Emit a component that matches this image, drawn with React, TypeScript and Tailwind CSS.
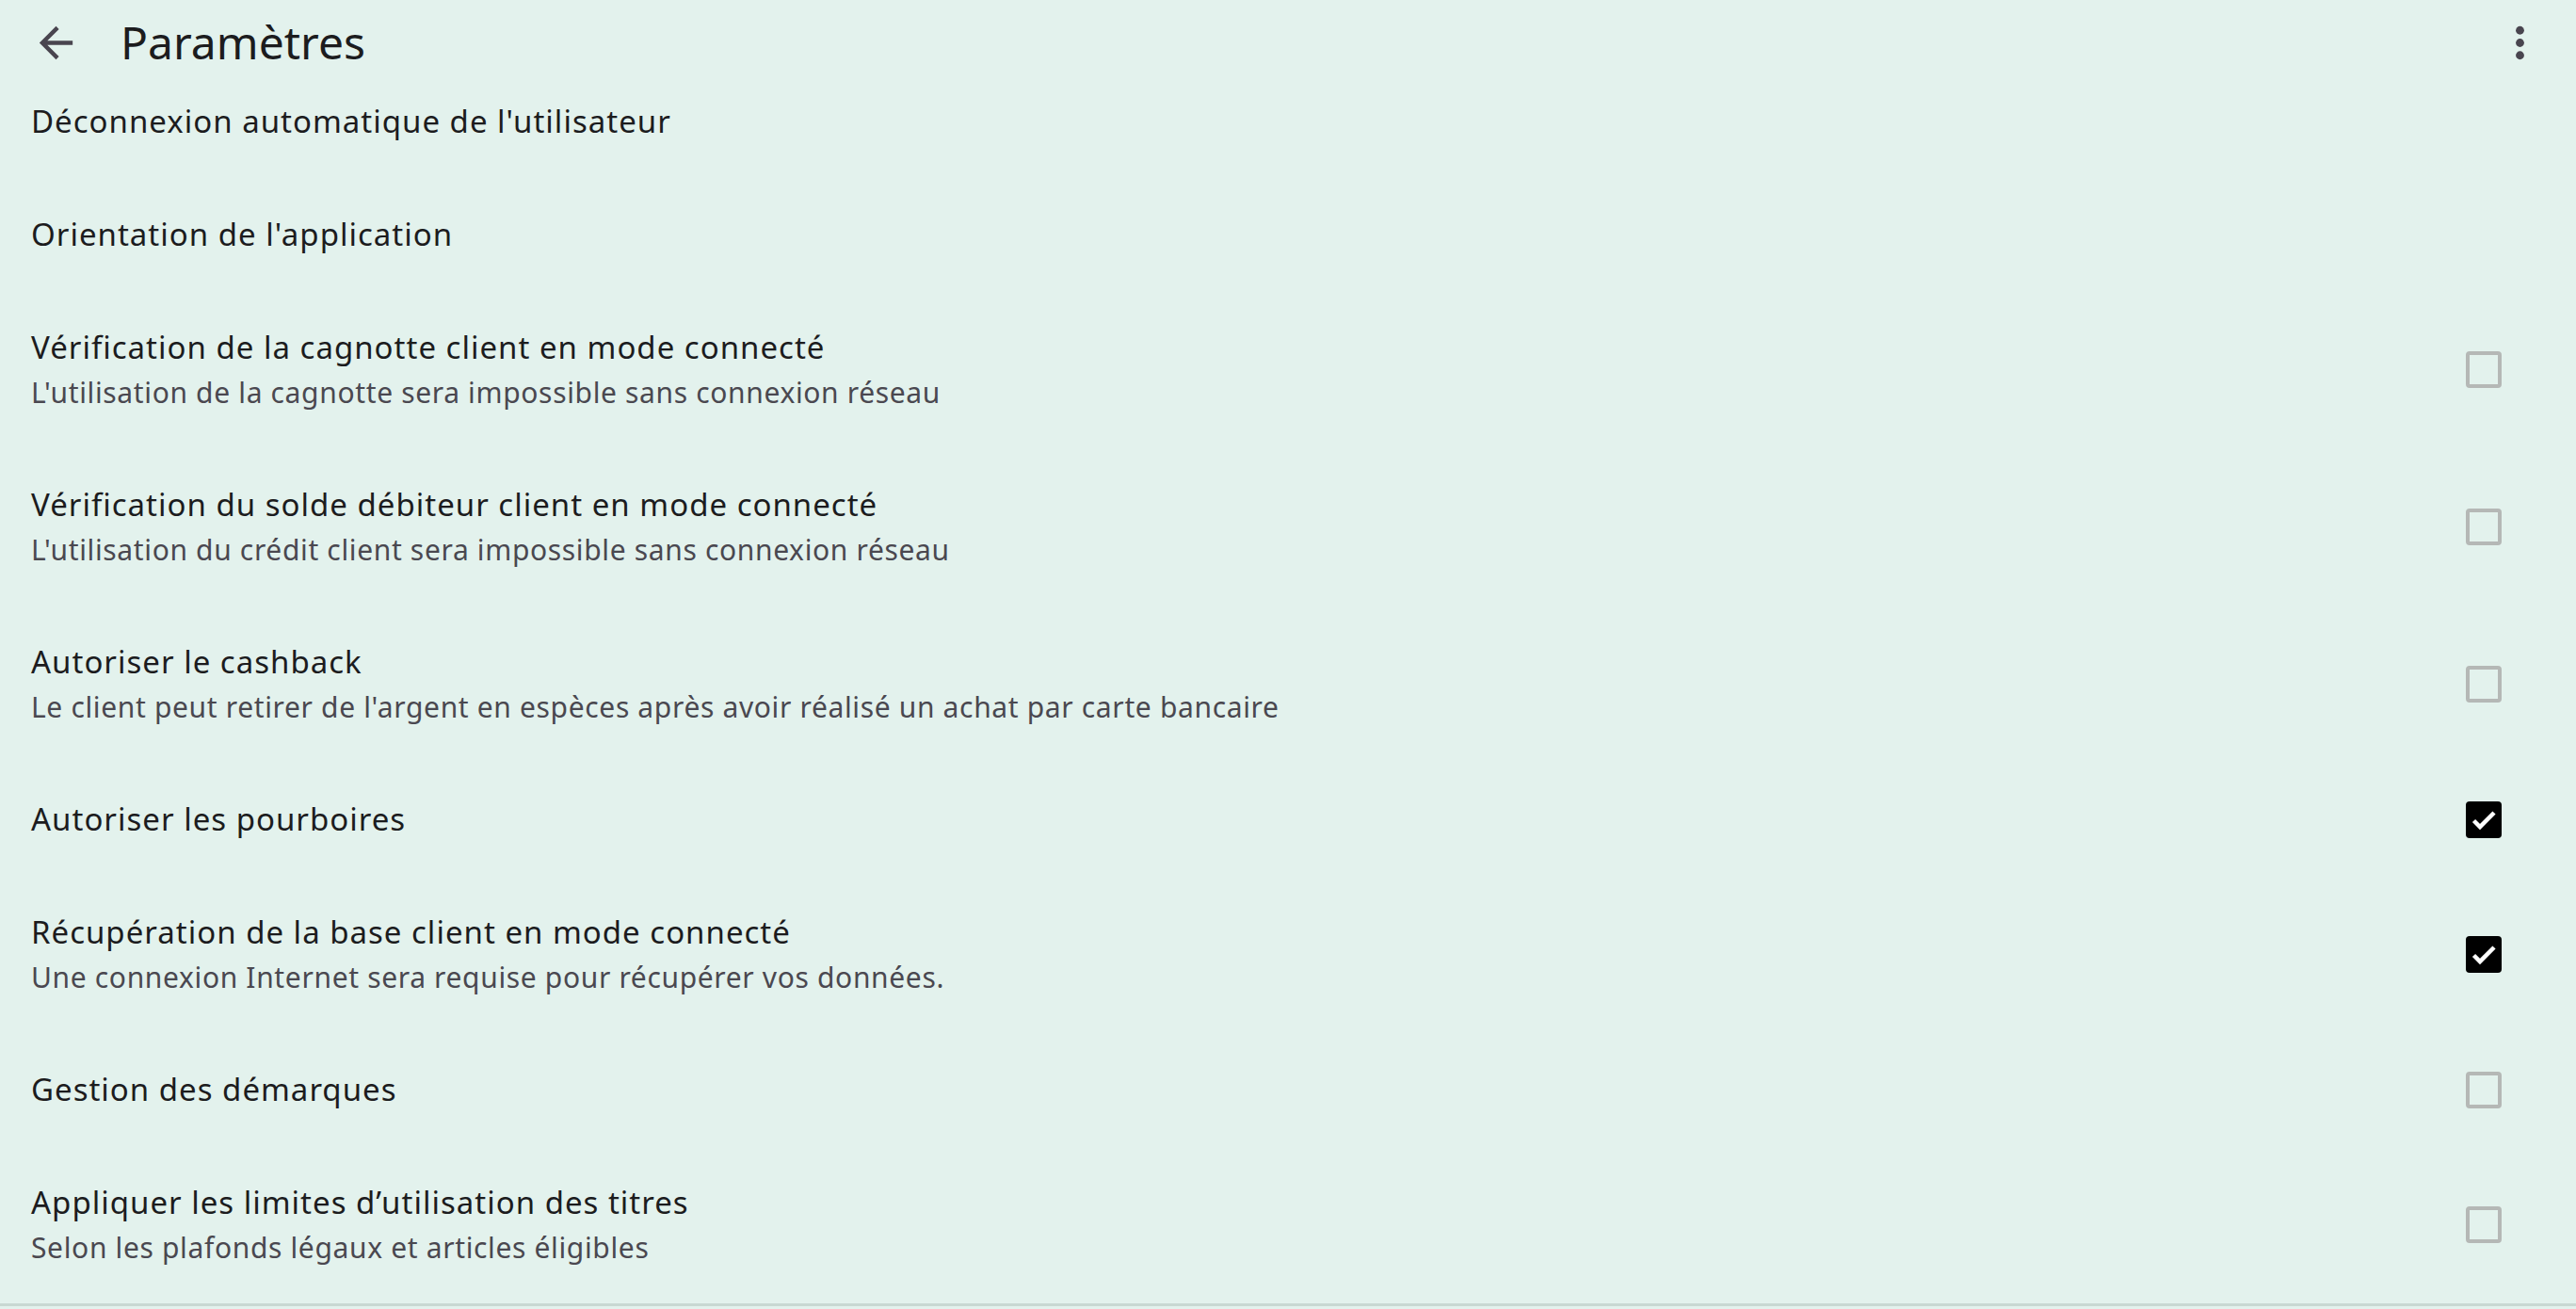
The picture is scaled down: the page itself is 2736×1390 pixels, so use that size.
import { useState } from "react";

type Pref = {
  title: string;
  summary?: string;
  checked?: boolean;
  checkbox?: boolean;
};

const PREFS: Pref[] = [
  { title: "Déconnexion automatique de l'utilisateur" },
  { title: "Orientation de l'application" },
  {
    title: "Vérification de la cagnotte client en mode connecté",
    summary: "L'utilisation de la cagnotte sera impossible sans connexion réseau",
    checkbox: true,
  },
  {
    title: "Vérification du solde débiteur client en mode connecté",
    summary: "L'utilisation du crédit client sera impossible sans connexion réseau",
    checkbox: true,
  },
  {
    title: "Autoriser le cashback",
    summary: "Le client peut retirer de l'argent en espèces après avoir réalisé un achat par carte bancaire",
    checkbox: true,
  },
  { title: "Autoriser les pourboires", checkbox: true, checked: true },
  {
    title: "Récupération de la base client en mode connecté",
    summary: "Une connexion Internet sera requise pour récupérer vos données.",
    checkbox: true,
    checked: true,
  },
  { title: "Gestion des démarques", checkbox: true },
  {
    title: "Appliquer les limites d’utilisation des titres",
    summary: "Selon les plafonds légaux et articles éligibles",
    checkbox: true,
  },
];

function CheckBox({ checked, onToggle }: { checked: boolean; onToggle: () => void }) {
  if (checked) {
    return (
      <button
        onClick={onToggle}
        className="w-[38px] h-[39px] rounded-[4px] bg-black flex items-center justify-center"
      >
        <svg width="38" height="39" viewBox="0 0 38 39">
          <path d="M8.5 20.5l6.5 6.5 15-15" fill="none" stroke="white" strokeWidth="4.5" />
        </svg>
      </button>
    );
  }
  return (
    <button
      onClick={onToggle}
      className="w-[38px] h-[39px] rounded-[4px] border-[4px] border-[#b5b8b6]"
    />
  );
}

function PrefRow({ pref }: { pref: Pref }) {
  const [checked, setChecked] = useState(!!pref.checked);
  const tall = !!pref.summary;
  return (
    <div className={`flex items-center pl-[33px] pr-[79px] ${tall ? "h-[167px]" : "h-[120px]"}`}>
      <div className="flex-1 flex flex-col">
        <span className="text-[33px] leading-[48px] tracking-[1px] text-[#1c1c1e]">{pref.title}</span>
        {pref.summary && (
          <span className="text-[30px] leading-[48px] tracking-[0.65px] text-[#4a4850]">{pref.summary}</span>
        )}
      </div>
      {pref.checkbox && <CheckBox checked={checked} onToggle={() => setChecked(!checked)} />}
    </div>
  );
}

export default function App() {
  return (
    <div
      className="w-[2736px] h-[1390px] bg-[#e3f2ed] overflow-hidden flex flex-col"
      style={{ fontFamily: '"Noto Sans", sans-serif' }}
    >
      <div className="h-[69px] flex items-start pt-[19px]">
        <button className="w-[53px] h-[53px] ml-[33px] flex items-center justify-center">
          <svg width="53" height="53" viewBox="0 0 24 24" fill="#49454f">
            <path d="M20 11H7.83l5.59-5.59L12 4l-8 8 8 8 1.41-1.41L7.83 13H20v-2z" />
          </svg>
        </button>
        <span className="ml-[42px] -mt-[6px] text-[48px] leading-[64px] text-[#1c1c1e]">Paramètres</span>
        <div className="flex-1" />
        <button className="w-[53px] h-[53px] mr-[33px] flex items-center justify-center">
          <svg width="53" height="53" viewBox="0 0 24 24" fill="#49454f">
            <circle cx="12" cy="6" r="2" />
            <circle cx="12" cy="12" r="2" />
            <circle cx="12" cy="18" r="2" />
          </svg>
        </button>
      </div>
      <div className="flex flex-col">
        {PREFS.map((p) => (
          <PrefRow key={p.title} pref={p} />
        ))}
      </div>
      <div className="h-[3px] bg-[#c8d8d2]" />
    </div>
  );
}
